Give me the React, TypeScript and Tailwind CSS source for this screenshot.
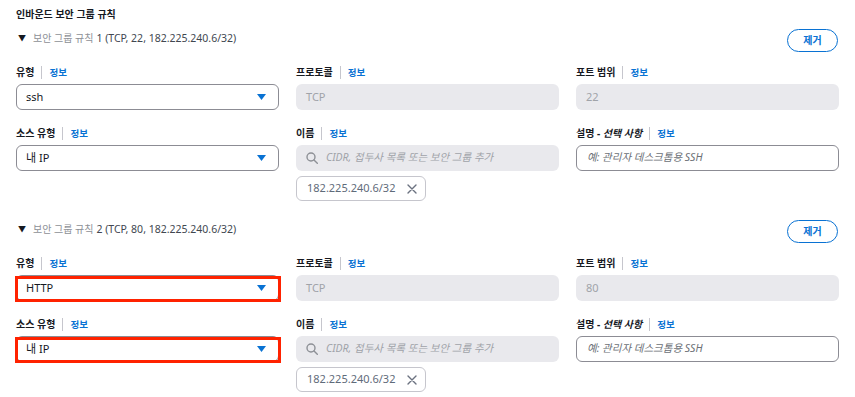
import React from 'react';

const font = { fontFamily: '"Noto Sans", "Noto Sans CJK KR", sans-serif' };

const rules = [
  { no: 1, type: 'ssh', port: '22', marked: false },
  { no: 2, type: 'HTTP', port: '80', marked: true },
];

function Label({ text, italic }: { text: string; italic?: string }) {
  return (
    <div className="flex h-[15px] items-center text-[10px] leading-[15px]">
      <span className="font-bold text-[#16191f]">
        {text}
        {italic && <span className="italic"> {italic}</span>}
      </span>
      <span className="mx-[7px] h-[13px] w-px bg-[#c6c6cd]" />
      <span className="font-bold text-[#0972d3] text-[9.5px]">정보</span>
    </div>
  );
}

function Caret() {
  return (
    <svg width="9" height="6" viewBox="0 0 9 6" className="shrink-0">
      <path d="M0 0h9L4.5 6z" fill="#0972d3" />
    </svg>
  );
}

function Select({ value, marked }: { value: string; marked: boolean }) {
  return (
    <div className="relative mt-1">
      <div className="flex h-[26px] items-center justify-between rounded-[6px] border border-[#8c8c94] bg-white pl-[9px] pr-[12px] text-[11px] text-[#16191f]">
        <span>{value}</span>
        <Caret />
      </div>
      {marked && (
        <div className="pointer-events-none absolute -left-px top-px -right-[2px] bottom-[-1px] border-[3px] border-[#ff2200]" />
      )}
    </div>
  );
}

function Disabled({ value }: { value: string }) {
  return (
    <div className="mt-1 flex h-[26px] items-center rounded-[6px] bg-[#e9e9ed] pl-[10px] text-[11px] text-[#a0a3a9]">
      {value}
    </div>
  );
}

function RuleBlock({ no, type, port, marked }: { no: number; type: string; port: string; marked: boolean }) {
  return (
    <div>
      <div className="flex items-start justify-between">
        <div className="mt-[2px] flex h-[14px] items-center text-[10.5px] leading-[14px]">
          <span className="ml-[2px] mr-[7px] text-[8px] text-[#16191f]">▼</span>
          <span className="text-[10px] text-[#8d9096]">보안 그룹 규칙</span>
          <span className="ml-[3px] text-[#414750]">{no} (TCP, {port}, 182.225.240.6/32)</span>
        </div>
        <button className="mr-px h-[23px] w-[51px] rounded-full border-[1.5px] border-[#0972d3] text-[10px] font-bold text-[#0972d3]">
          제거
        </button>
      </div>

      <div className="mt-[13px] grid grid-cols-3 gap-x-[17px] gap-y-4">
        <div>
          <Label text="유형" />
          <Select value={type} marked={marked} />
        </div>
        <div>
          <Label text="프로토콜" />
          <Disabled value="TCP" />
        </div>
        <div>
          <Label text="포트 범위" />
          <Disabled value={port} />
        </div>

        <div>
          <Label text="소스 유형" />
          <Select value="내 IP" marked={marked} />
        </div>
        <div>
          <Label text="이름" />
          <div className="mt-1 flex h-[26px] items-center gap-[8px] rounded-[6px] bg-[#e9e9ed] pl-[10px] text-[10.5px] italic text-[#a0a3a9]">
            <svg width="12" height="12" viewBox="0 0 12 12" fill="none" stroke="#8d9096" strokeWidth="1.4">
              <circle cx="5" cy="5" r="4" />
              <path d="M8 8l3.3 3.3" strokeLinecap="round" />
            </svg>
            <span>CIDR, 접두사 목록 또는 보안 그룹 추가</span>
          </div>
          <div className="mt-[5px] flex h-[25px] w-[130px] items-center justify-between rounded-[6px] border border-[#c6c6cd] bg-white pl-[10px] pr-[8px] text-[11px] text-[#5f6b7a]">
            <span>182.225.240.6/32</span>
            <svg width="10" height="10" viewBox="0 0 10 10" stroke="#6b7280" strokeWidth="1.4" strokeLinecap="round">
              <path d="M1 1l8 8M9 1l-8 8" />
            </svg>
          </div>
        </div>
        <div>
          <Label text="설명 -" italic="선택 사항" />
          <div className="mt-1 flex h-[26px] items-center rounded-[6px] border border-[#8c8c94] bg-white pl-[10px] text-[10.5px] italic text-[#6b6f76]">
            예: 관리자 데스크톱용 SSH
          </div>
        </div>
      </div>
    </div>
  );
}

export default function App() {
  return (
    <div className="h-[397px] w-[855px] overflow-hidden bg-white px-4 pt-[7px]" style={font}>
      <div className="h-[15px] text-[10px] font-bold leading-[15px] text-[#16191f]">인바운드 보안 그룹 규칙</div>
      <div className="mt-[7px] flex flex-col gap-[19px]">
        {rules.map((r) => (
          <RuleBlock key={r.no} {...r} />
        ))}
      </div>
    </div>
  );
}
